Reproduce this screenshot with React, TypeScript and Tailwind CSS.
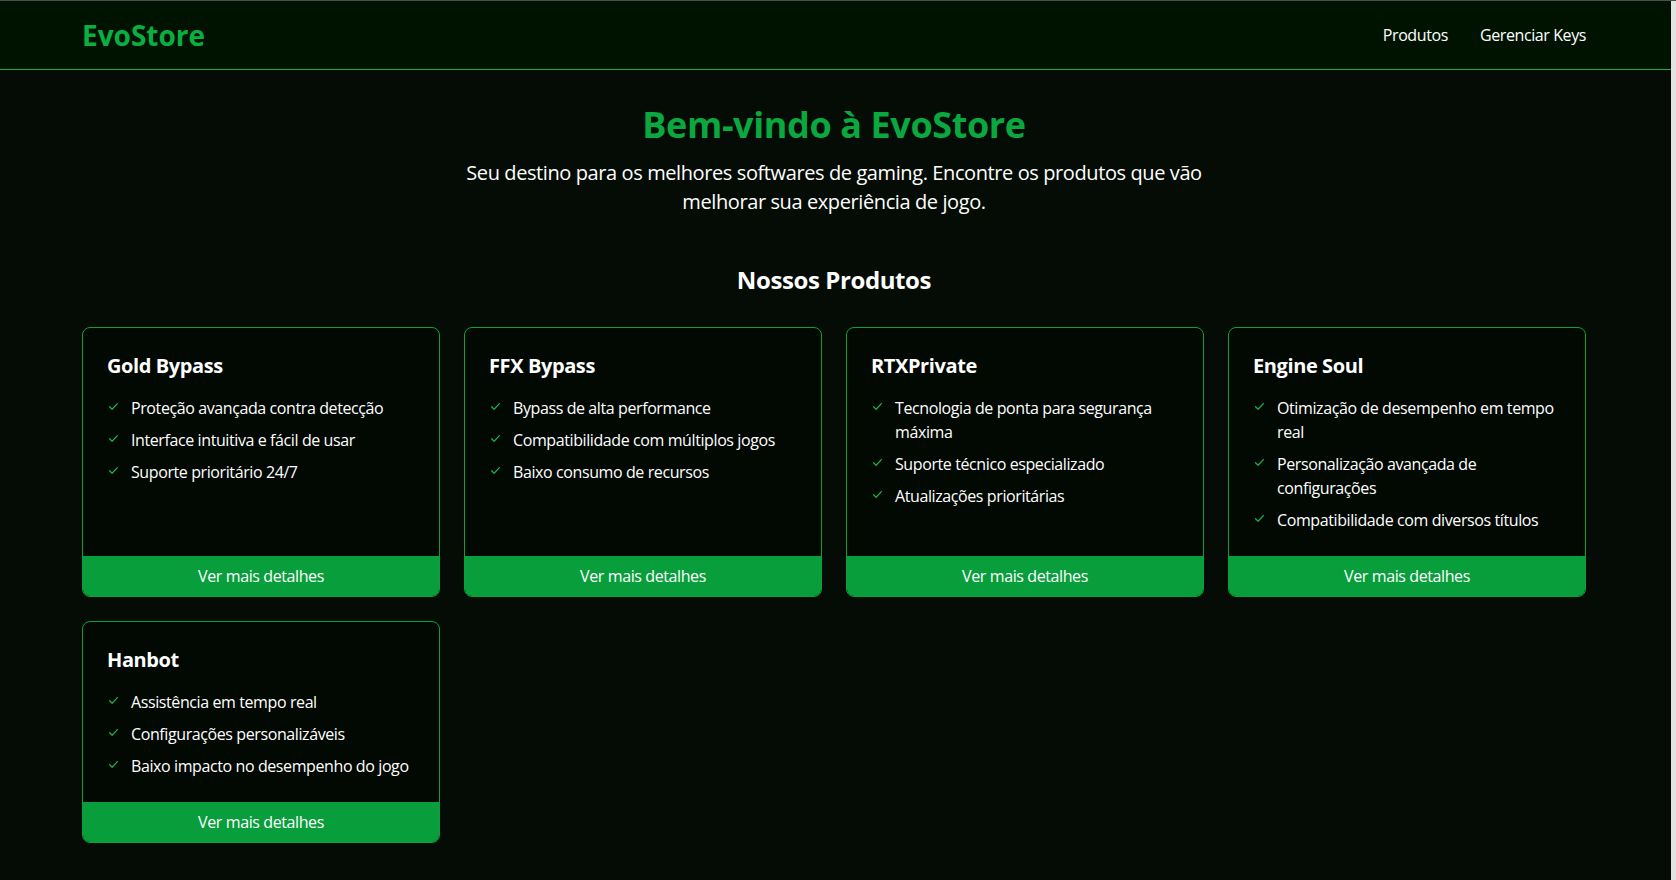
const products = [
  {
    name: 'Gold Bypass',
    features: ['Proteção avançada contra detecção', 'Interface intuitiva e fácil de usar', 'Suporte prioritário 24/7'],
  },
  {
    name: 'FFX Bypass',
    features: ['Bypass de alta performance', 'Compatibilidade com múltiplos jogos', 'Baixo consumo de recursos'],
  },
  {
    name: 'RTXPrivate',
    features: ['Tecnologia de ponta para segurança máxima', 'Suporte técnico especializado', 'Atualizações prioritárias'],
  },
  {
    name: 'Engine Soul',
    features: [
      'Otimização de desempenho em tempo real',
      'Personalização avançada de configurações',
      'Compatibilidade com diversos títulos',
    ],
  },
  {
    name: 'Hanbot',
    features: ['Assistência em tempo real', 'Configurações personalizáveis', 'Baixo impacto no desempenho do jogo'],
  },
]

function CheckMark() {
  return (
    <span className="w-[24px] shrink-0 pt-[7px] pl-[2px]">
      <svg width="9" height="7" viewBox="0 0 9 7" fill="none" className="block">
        <path d="M0.6 3.8 L3.1 6.2 L8.4 0.6" stroke="#1aad4a" strokeWidth="1.3" strokeLinecap="round" strokeLinejoin="round" />
      </svg>
    </span>
  )
}

export default function App() {
  return (
    <div
      className="flex min-h-[880px] border-t border-[#4d4d4d] bg-[#040c05] text-white"
      style={{ fontFamily: '"Open Sans", "Noto Sans", sans-serif' }}
    >
      <div className="flex-1 tracking-tight">
        <header className="h-[69px] border-b border-[#1fa849] bg-[#001300]">
          <div className="ml-[82px] flex h-full w-[1504px] items-center justify-between">
            <span className="text-[28px] font-bold tracking-normal text-[#0bae40]">EvoStore</span>
            <nav className="flex items-center gap-8 text-base">
              <a href="#">Produtos</a>
              <a href="#">Gerenciar Keys</a>
            </nav>
          </div>
        </header>

        <main className="ml-[82px] w-[1504px] pt-[35px] pb-10">
          <section className="text-center">
            <h1 className="text-4xl font-bold text-[#0aa83f]">Bem-vindo à EvoStore</h1>
            <p className="mx-auto mt-[13px] max-w-3xl text-xl leading-[29px]">
              Seu destino para os melhores softwares de gaming. Encontre os produtos que vão melhorar sua experiência de
              jogo.
            </p>
          </section>

          <h2 className="mt-12 mb-[31px] text-center text-2xl font-bold">Nossos Produtos</h2>

          <div className="grid grid-cols-4 gap-6">
            {products.map((p) => (
              <div key={p.name} className="flex flex-col overflow-hidden rounded-lg border border-[#0c9f3c] bg-[#020802]">
                <div className="p-6">
                  <h3 className="mb-4 text-xl font-bold">{p.name}</h3>
                  <ul className="space-y-2">
                    {p.features.map((f) => (
                      <li key={f} className="flex items-start text-base leading-6">
                        <CheckMark />
                        <span>{f}</span>
                      </li>
                    ))}
                  </ul>
                </div>
                <button className="mt-auto h-10 w-full bg-[#089e3b] text-base text-white">Ver mais detalhes</button>
              </div>
            ))}
          </div>
        </main>
      </div>
      <div className="w-[5px] shrink-0 bg-[#e3e3e3]" />
    </div>
  )
}
